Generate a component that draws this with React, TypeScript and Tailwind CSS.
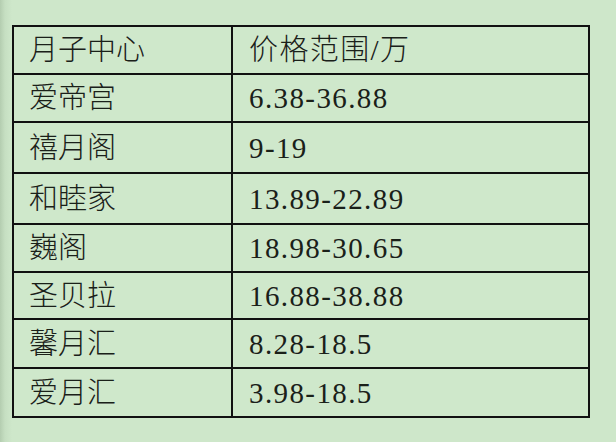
import React from "react";

const rows: { name: string; price: string; h: string }[] = [
  { name: "月子中心", price: "价格范围/万", h: "h-[48px]" },
  { name: "爱帝宫", price: "6.38-36.88", h: "h-[48px]" },
  { name: "禧月阁", price: "9-19", h: "h-[51px]" },
  { name: "和睦家", price: "13.89-22.89", h: "h-[51px]" },
  { name: "巍阁", price: "18.98-30.65", h: "h-[48px]" },
  { name: "圣贝拉", price: "16.88-38.88", h: "h-[47px]" },
  { name: "馨月汇", price: "8.28-18.5", h: "h-[49px]" },
  { name: "爱月汇", price: "3.98-18.5", h: "h-[47px]" },
];

export default function App() {
  return (
    <div
      className="w-[616px] h-[442px] overflow-hidden bg-[linear-gradient(to_right,#b4cdb0_0px,#c6dfc2_5px,#cee7ca_12px,#cee7ca_100%)] pt-[25px] pl-[12px]"
      style={{ fontFamily: '"Liberation Serif", "Noto Sans CJK SC", serif' }}
    >
      <div className="w-[578px] border-2 border-[#111] flex flex-col text-[29px] font-light text-[#1a2019] bg-[#cfe8cb]">
        {rows.map((r, i) => (
          <div
            key={i}
            className={`flex ${r.h} ${i < rows.length - 1 ? "border-b-2 border-[#111]" : ""}`}
          >
            <div className="w-[219px] border-r-2 border-[#111] flex items-center pl-[15px] pt-[1px] leading-none">
              {r.name}
            </div>
            <div className="flex-1 flex items-center pl-[16px] pt-[1px] leading-none tracking-[1.4px]">
              {r.price}
            </div>
          </div>
        ))}
      </div>
    </div>
  );
}
